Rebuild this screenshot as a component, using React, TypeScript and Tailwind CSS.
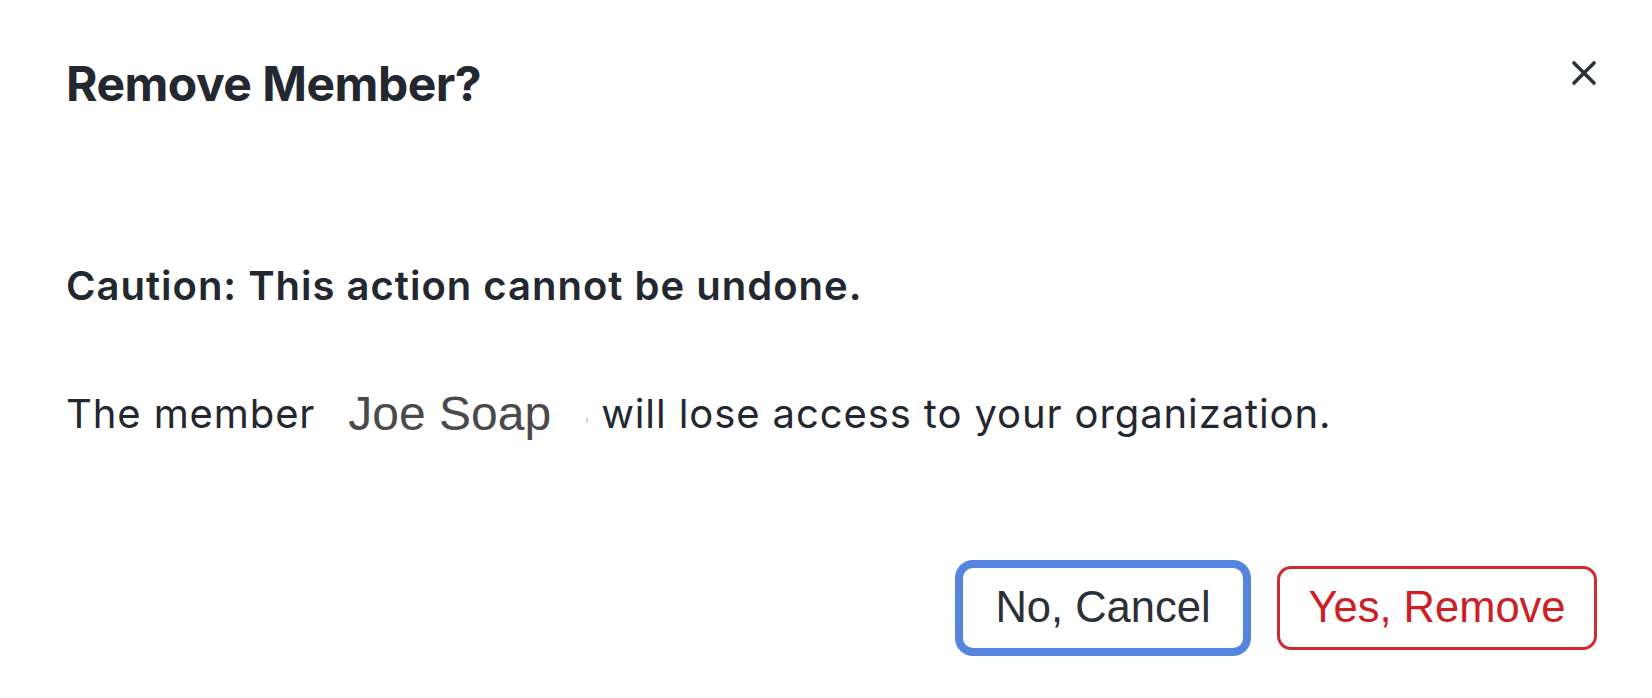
export default function App() {
  return (
    <div className="h-[698px] w-full bg-white font-['Inter',sans-serif] text-[#23272f] flex flex-col pl-[66px] pr-[55px]">
      <div className="flex items-start justify-between pt-[60px]">
        <h2 className="text-[48px] leading-[48px] font-bold tracking-[-0.5px]">Remove Member?</h2>
        <button className="w-[26px] h-[26px] text-[#2d3138]" aria-label="Close">
          <svg viewBox="0 0 26 26" width="26" height="26" fill="none" stroke="currentColor" strokeWidth="3.6" strokeLinecap="round">
            <path d="M3 3 L23 23 M23 3 L3 23" />
          </svg>
        </button>
      </div>

      <p className="mt-[159px] text-[40px] leading-[38px] font-semibold tracking-[1px]">
        Caution: This action cannot be undone.
      </p>

      <div className="mt-[85px] flex items-baseline text-[40px] leading-[38px] tracking-[0.9px]">
        <span>The member</span>
        <span className="ml-[33px] relative top-[2px] font-['Liberation_Sans',Arial,sans-serif] text-[48px] leading-[44px] tracking-normal text-[#4a4a4a]">
          Joe Soap
        </span>
        <span className="ml-[35px] w-[2px] h-[5px] bg-[#d4d4d4] relative -top-[5px]" />
        <span className="ml-[13px]">will lose access to your organization.</span>
      </div>

      <div className="mt-[132px] flex justify-end gap-[32px] font-['Liberation_Sans',Arial,sans-serif] text-[43.5px]">
        <button className="w-[284px] h-[84px] rounded-[12px] border-2 border-[#5585df] shadow-[0_0_0_6px_#5585df] bg-white text-[#2b2f36] flex items-center justify-center">
          No, Cancel
        </button>
        <button className="w-[320px] h-[84px] rounded-[14px] border-[3px] border-[#cf2a2e] bg-white text-[#cc2027] flex items-center justify-center">
          Yes, Remove
        </button>
      </div>
    </div>
  );
}
